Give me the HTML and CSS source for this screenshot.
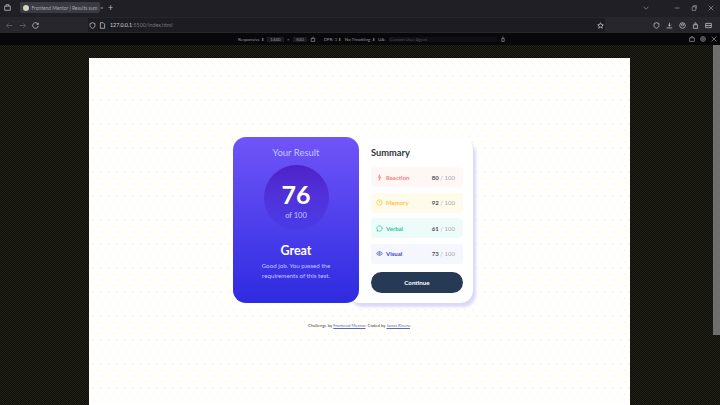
FILE: index.html
```html
<!DOCTYPE html>
<html>
<head>
  <title>Frontend Mentor | Results summary</title>
  <link rel="stylesheet" href="styles.css">
</head>

<body>

  <div class="tabbar">
    <svg class="ico" viewBox="0 0 10 10"><path d="M1 3h8v6H1zM3 3V1h4v2" /></svg>
    <div class="tab">
      <span class="favicon"></span>
      <span class="tab-title">Frontend Mentor | Results sum</span>
      <span class="tab-close">×</span>
    </div>
    <span class="tab-new">+</span>
    <svg class="ico-sm chevron" viewBox="0 0 10 10"><path d="M1 3l4 4 4-4" /></svg>
    <svg class="ico-sm" viewBox="0 0 10 10"><path d="M1 5h8" /></svg>
    <svg class="ico-sm" viewBox="0 0 10 10"><path d="M2 3h6v6H2zM4 3V1h5v5" /></svg>
    <svg class="ico-sm" viewBox="0 0 10 10"><path d="M1 1l8 8M9 1l-8 8" /></svg>
  </div>

  <div class="toolbar">
    <svg class="ico dim" viewBox="0 0 10 10"><path d="M9 5H1M4 2L1 5l3 3" /></svg>
    <svg class="ico dim" viewBox="0 0 10 10"><path d="M1 5h8M6 2l3 3-3 3" /></svg>
    <svg class="ico" viewBox="0 0 10 10"><path d="M8.500 3A4 4 0 1 0 9 5.500M9 1v2.500H6.500" /></svg>
    <div class="urlbar">
      <svg class="ico" viewBox="0 0 10 10"><path d="M5 1l3.500 1.200V5c0 2-1.500 3.200-3.500 4C3 8.200 1.500 7 1.500 5V2.200z" /></svg>
      <svg class="ico" viewBox="0 0 10 10"><path d="M2 1h4l2 2v6H2z" /></svg>
      <span class="url"><b>127.0.0.1</b>:5500/index.html</span>
      <svg class="ico star" viewBox="0 0 10 10"><path d="M5 1l1.200 2.700 2.800.3-2.100 1.900.6 2.900L5 7.300 2.500 8.800l.6-2.900L1 4l2.800-.3z" /></svg>
    </div>
    <svg class="ico" viewBox="0 0 10 10"><path d="M5 1l3.500 1.200V5c0 2-1.500 3.200-3.500 4C3 8.200 1.500 7 1.500 5V2.200z" /></svg>
    <svg class="ico" viewBox="0 0 10 10"><path d="M5 1v5M3 4l2 2 2-2M1 8.500h8" /></svg>
    <svg class="ico" viewBox="0 0 10 10"><circle cx="5" cy="5" r="4" /><circle cx="5" cy="4" r="1.500" /></svg>
    <svg class="ico" viewBox="0 0 10 10"><path d="M2 4h6v5H2zM4 4V2a1 1 0 0 1 2 0v2" /></svg>
    <svg class="ico" viewBox="0 0 10 10"><path d="M1 2h8v6H1zM1 5h8" /></svg>
  </div>

  <div class="devbar">
    <div class="dev-items">
      <span>Responsive ⬍</span>
      <span class="dev-box">1440</span>
      <span>×</span>
      <span class="dev-box">500</span>
      <svg class="ico-sm" viewBox="0 0 10 10"><path d="M2 4h6v5H2zM5 4V1" /></svg>
      <span class="dev-dpr">DPR: 1 ⬍</span>
      <span>No Throttling ⬍</span>
      <span>UA:</span>
      <span class="dev-ua">Custom User Agent</span>
      <svg class="ico-sm" viewBox="0 0 10 10"><path d="M3 9V4h4v5zM5 4V1" /></svg>
    </div>
    <div class="dev-right">
      <svg class="ico-sm" viewBox="0 0 10 10"><path d="M1 3h8v6H1zM3 3l1-2h2l1 2" /></svg>
      <svg class="ico-sm" viewBox="0 0 10 10"><circle cx="5" cy="5" r="2" /><circle cx="5" cy="5" r="4" /></svg>
      <svg class="ico-sm" viewBox="0 0 10 10"><path d="M1 1l8 8M9 1l-8 8" /></svg>
    </div>
  </div>

  <div class="viewport">
    <div class="stage">
      <div class="page">
        <main class="cards">
          <section class="result">
            <h2>Your Result</h2>
            <div class="circle">
              <span class="score">76</span>
              <span class="of">of 100</span>
            </div>
            <h1>Great</h1>
            <p>Good job. You passed the requirements of this test.</p>
          </section>

          <section class="summary">
            <h3>Summary</h3>
            <div class="row reaction">
              <svg viewBox="0 0 10 10"><path d="M5 1L3.500 5H5L4.500 9 7 4.500H5.500z" /></svg>
              <span class="label">Reaction</span>
              <span class="val"><b>80</b> / 100</span>
            </div>
            <div class="row memory">
              <svg viewBox="0 0 10 10"><circle cx="5" cy="5" r="3.800" /><path d="M5 3v2.500" /></svg>
              <span class="label">Memory</span>
              <span class="val"><b>92</b> / 100</span>
            </div>
            <div class="row verbal">
              <svg viewBox="0 0 10 10"><path d="M5 1.200a3.800 3.800 0 1 1-1.800 7.100L1.500 8.800l.5-1.700A3.800 3.800 0 0 1 5 1.200z" /></svg>
              <span class="label">Verbal</span>
              <span class="val"><b>61</b> / 100</span>
            </div>
            <div class="row visual">
              <svg viewBox="0 0 10 10"><path d="M1 5c1-1.800 2.400-2.600 4-2.600S8 3.200 9 5C8 6.800 6.600 7.600 5 7.600S2 6.800 1 5z" /><circle cx="5" cy="5" r="1" /></svg>
              <span class="label">Visual</span>
              <span class="val"><b>73</b> / 100</span>
            </div>
            <button>Continue</button>
          </section>
        </main>

        <footer class="credit">
          Challenge by <a>Frontend Mentor</a>. Coded by <a>Jonas Rivera</a>.
        </footer>
      </div>
    </div>
    <div class="scrollbar"></div>
  </div>

</body>
</html>
```

FILE: styles.css
```css
* {
  box-sizing: border-box;
}

html, body {
  margin: 0;
  height: 100%;
  overflow: hidden;
}

body {
  font-family: Lato, 'Liberation Sans', sans-serif;
  display: flex;
  flex-direction: column;
  background: #16160c;
}

svg {
  fill: none;
  stroke: currentColor;
  stroke-width: 1.1;
  flex: none;
}

.ico {
  width: 7px;
  height: 7px;
  color: #c4c4c8;
}

.ico.dim {
  color: #66666b;
}

.ico-sm {
  width: 6px;
  height: 6px;
  color: #a0a0a4;
}

/* browser chrome */
.tabbar {
  height: 17px;
  padding: 0 6px 2px 4px;
  display: flex;
  align-items: center;
  gap: 11px;
  background: #1f1f25;
}

.tab {
  width: 80px;
  height: 11px;
  margin-left: -2px;
  padding: 0 3px;
  display: flex;
  align-items: center;
  gap: 2.500px;
  border-radius: 2px;
  background: #3a3a42;
  color: #a8a8ae;
  font-size: 4.900px;
  white-space: nowrap;
}

.favicon {
  width: 6px;
  height: 6px;
  border-radius: 50%;
  background: #d8d4c0;
  flex: none;
}

.tab-title {
  flex: 1;
}

.tab-close {
  font-size: 6px;
}

.tab-new {
  margin-left: -3px;
  margin-right: auto;
  color: #c0c0c4;
  font-size: 9px;
}

.chevron {
  margin-right: 14px;
}

.toolbar {
  height: 16px;
  padding: 0 5px 0 6px;
  display: flex;
  align-items: center;
  gap: 6px;
  background: #26262c;
}

.urlbar {
  width: 517px;
  height: 14px;
  margin: 0 42px 0 43px;
  padding: 0 1.500px 0 1px;
  display: flex;
  align-items: center;
  gap: 3px;
  background: #1c1c22;
  font-size: 5.300px;
  color: #77777d;
}

.url {
  margin-left: 1px;
}

.url b {
  font-weight: 400;
  color: #d4d4d8;
}

.star {
  margin-left: auto;
}

.devbar {
  height: 12px;
  padding: 0 3px 0 238px;
  display: flex;
  align-items: center;
  justify-content: space-between;
  background: #08080a;
  color: #96969a;
  font-size: 4.400px;
}

.dev-items {
  display: flex;
  align-items: center;
  gap: 3.500px;
  white-space: nowrap;
}

.dev-box {
  padding: 0 3px;
  background: #1c1c20;
}

.dev-dpr {
  margin-left: 4px;
}

.dev-ua {
  width: 108px;
  padding-left: 1px;
  color: #4c4c52;
  background: #101014;
}

.dev-right {
  display: flex;
  gap: 5px;
}

/* viewport */
.viewport {
  flex: 1;
  display: flex;
  min-height: 0;
  background-color: #181808;
  background-image: repeating-conic-gradient(#22220e 0 25%, #0d0d14 0 50%);
  background-size: 2px 2px;
}

.stage {
  flex: 1;
  padding: 13px 83px 0 89px;
  display: flex;
}

.scrollbar {
  width: 7px;
  height: 290px;
  background: #6e6e6e;
}

.page {
  width: 541px;
  height: 347px;
  padding-top: 79px;
  display: flex;
  flex-direction: column;
  align-items: center;
  background-color: #fff;
  background-image:
    radial-gradient(circle, #fffbd6 0.7px, transparent 1px),
    radial-gradient(circle, #fffbd6 0.7px, transparent 1px);
  background-size: 8px 12px;
  background-position: 0 0, 4px 6px;
}

.cards {
  display: flex;
  margin-left: -13px;
  height: 166px;
}

/* left card */
.result {
  width: 126px;
  padding-top: 9px;
  display: flex;
  flex-direction: column;
  align-items: center;
  position: relative;
  z-index: 1;
  border-radius: 13px;
  background: linear-gradient(#7055f8, #2e2be0);
  color: #fff;
  text-align: center;
}

.result h2 {
  margin: 0 0 6px;
  font-size: 9.500px;
  line-height: 13px;
  font-weight: 400;
  color: #c8c7ff;
}

.circle {
  width: 65px;
  height: 65px;
  padding-top: 13px;
  display: flex;
  flex-direction: column;
  align-items: center;
  border-radius: 50%;
  background: linear-gradient(#4d21c9, rgba(37, 33, 201, 0.1));
}

.score {
  font-size: 25px;
  line-height: 32px;
  font-weight: 700;
}

.of {
  font-size: 7.500px;
  line-height: 11px;
  color: #c8c7ff;
}

.result h1 {
  margin: 11.500px 0 2.500px;
  font-size: 12.500px;
  line-height: 17px;
  font-weight: 700;
}

.result p {
  width: 90px;
  margin: 0;
  font-size: 6.200px;
  line-height: 10px;
  color: #c8c7ff;
}

/* right card */
.summary {
  width: 126px;
  margin-left: -12px;
  padding: 9px 10px 0 24px;
  display: flex;
  flex-direction: column;
  border-radius: 13px;
  background: #fff;
  box-shadow: 3px 4px 3px #d9d9fb;
}

.summary h3 {
  margin: 0 0 8px;
  font-size: 9.300px;
  line-height: 13px;
  font-weight: 700;
  color: #2f3640;
}

.row {
  height: 20px;
  margin-bottom: 5.500px;
  padding: 0 8px 0 5px;
  display: flex;
  align-items: center;
  gap: 3px;
  border-radius: 3px;
  font-size: 6px;
}

.row svg {
  width: 7px;
  height: 7px;
}

.label {
  flex: 1;
  font-weight: 700;
}

.val {
  color: #a4a8b0;
}

.val b {
  color: #4c4f58;
}

.reaction {
  background: #fff6f6;
  color: #ff7a7a;
}

.memory {
  background: #fffbea;
  color: #ffc23e;
}

.verbal {
  background: #edfcf8;
  color: #2cc7a2;
}

.visual {
  background: #f6f6fe;
  color: #3a45d8;
}

button {
  height: 21px;
  margin-top: 3px;
  border: none;
  border-radius: 11px;
  background: #263a56;
  color: #fff;
  font-family: inherit;
  font-size: 6.200px;
  font-weight: 700;
}

.credit {
  margin-top: 20px;
  font-size: 4.300px;
  color: #444;
}

.credit a {
  color: #5a6cb0;
  text-decoration: underline;
}
```
